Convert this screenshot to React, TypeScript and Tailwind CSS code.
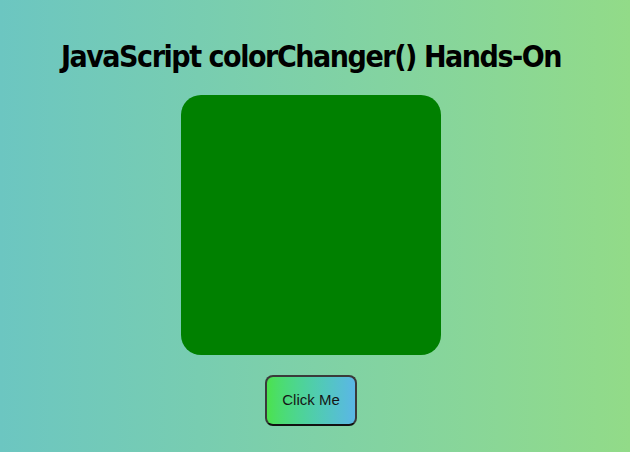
import React, { useState } from "react";

const colors = ["#008000", "#1e90ff", "#ff6347", "#8a2be2", "#ffa500"];

const App: React.FC = () => {
  const [idx, setIdx] = useState(0);

  return (
    <div className="min-h-[452px] w-full bg-gradient-to-r from-[#6cc6c1] to-[#92db88] flex flex-col items-center pt-[38px] pr-[8px]">
      {/* Title */}
      <h1 className="font-['DejaVu_Sans_Condensed',sans-serif] text-[30px] leading-[38px] font-bold text-black tracking-[-1.45px]">
        JavaScript colorChanger() Hands-On
      </h1>

      {/* Color box */}
      <div
        className="mt-[19px] w-[260px] h-[260px] rounded-[20px]"
        style={{ backgroundColor: colors[idx] }}
      />

      {/* Button */}
      <button
        onClick={() => setIdx((idx + 1) % colors.length)}
        className="mt-[20px] w-[92px] h-[51px] rounded-[8px] border-2 border-[#3a3a3a] border-b-[#111] bg-gradient-to-r from-[#4be24c] to-[#5bb6e6] text-[15px] text-[#151515] font-['Liberation_Sans',Arial,sans-serif]"
      >
        Click Me
      </button>
    </div>
  );
};

export default App;
